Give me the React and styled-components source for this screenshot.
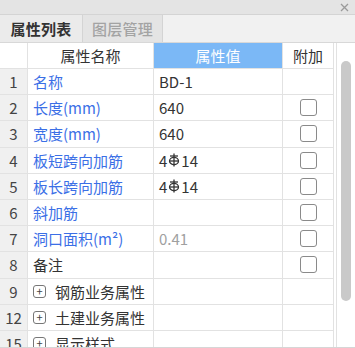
import React from "react";
import styled, { createGlobalStyle } from "styled-components";

const Global = createGlobalStyle`
  html, body { margin: 0; padding: 0; background: #fff; }
  * { box-sizing: border-box; }
`;

const Panel = styled.div`
  width: 355px;
  height: 348px;
  display: flex;
  flex-direction: column;
  overflow: hidden;
  font-family: "Noto Sans CJK SC", "Noto Sans", sans-serif;
  font-size: 15px;
  color: #333;
  background: #fff;
  border-bottom: 1px solid #d6d6d6;
`;

const TitleBar = styled.div`
  height: 15px;
  flex: none;
  background: #e4e4e4;
  border-bottom: 1px solid #d4d4d4;
  display: flex;
  justify-content: flex-end;
  align-items: center;
  padding-right: 6px;
`;

const Close = styled.svg`
  width: 9px;
  height: 9px;
`;

const TabBar = styled.div`
  height: 28px;
  flex: none;
  display: flex;
  background: #f1f1f1;
  border-bottom: 1px solid #d8d8d8;
`;

const Tab = styled.div`
  width: ${(p) => (p.$active ? "83px" : "80px")};
  display: flex;
  align-items: center;
  justify-content: center;
  font-weight: ${(p) => (p.$active ? 700 : 500)};
  color: ${(p) => (p.$active ? "#333" : "#a3a3a3")};
  background: ${(p) => (p.$active ? "#ebebeb" : "#e4e4e4")};
  border-right: 1px solid #d4d4d4;
  letter-spacing: 0.2px;
`;

const Body = styled.div`
  flex: 1;
  display: flex;
  min-height: 0;
`;

const Table = styled.div`
  width: 334px;
  display: grid;
  grid-template-columns: 28px 126px 129px 51px;
  grid-auto-rows: 26.2px;
  grid-template-rows: 26px;
  align-content: start;
  overflow: hidden;
`;

const Cell = styled.div`
  display: flex;
  align-items: center;
  border-right: 1px solid #e2e2e2;
  border-bottom: 1px solid #e2e2e2;
  padding: 0 5px;
  white-space: nowrap;
  overflow: hidden;
  justify-content: ${(p) => (p.$center ? "center" : "flex-start")};
  background: ${(p) => p.$bg || "#fff"};
  color: ${(p) => p.$color || "#333"};
`;

const Num = styled(Cell)`
  background: #f0f0f0;
  justify-content: center;
  padding: 0;
  color: #444;
`;

const HeadCell = styled(Cell)`
  justify-content: center;
  background: ${(p) => (p.$hl ? "#7bb8f6" : "#fff")};
  color: ${(p) => (p.$hl ? "#fff" : "#333")};
`;

const Check = styled.span`
  width: 17px;
  height: 17px;
  border: 1.5px solid #8a8a8a;
  border-radius: 3px;
  background: #fff;
`;

const Plus = styled.span`
  width: 13px;
  height: 13px;
  border: 1px solid #777;
  border-radius: 3px;
  display: inline-flex;
  align-items: center;
  justify-content: center;
  font-size: 11px;
  line-height: 1;
  color: #444;
  margin: 0 9px 0 0;
`;

const ScrollTrack = styled.div`
  flex: 1;
  border-left: 1px solid #e2e2e2;
  margin-left: 2px;
  padding: 18px 0 0 4px;
`;

const Thumb = styled.div`
  width: 10px;
  height: 240px;
  border-radius: 5px;
  background: #c9c9c9;
`;

const Rebar = () => (
  <svg width="12" height="14" viewBox="0 0 12 14" style={{ margin: "0 1px" }}>
    <g stroke="#333" strokeWidth="1.3" fill="none">
      <line x1="6" y1="0.5" x2="6" y2="13.5" />
      <ellipse cx="6" cy="8" rx="4.5" ry="3.6" />
      <line x1="2" y1="3" x2="10" y2="3" />
      <line x1="1.5" y1="8" x2="10.5" y2="8" />
    </g>
  </svg>
);

const rows = [
  { n: 1, name: "名称", blue: true, value: "BD-1", check: false },
  { n: 2, name: "长度(mm)", blue: true, value: "640", check: true },
  { n: 3, name: "宽度(mm)", blue: true, value: "640", check: true },
  { n: 4, name: "板短跨向加筋", blue: true, value: "rebar", check: true },
  { n: 5, name: "板长跨向加筋", blue: true, value: "rebar", check: true },
  { n: 6, name: "斜加筋", blue: true, value: "", check: true },
  { n: 7, name: "洞口面积(m²)", blue: true, value: "0.41", grey: true, check: true },
  { n: 8, name: "备注", value: "", check: true },
  { n: 9, name: "钢筋业务属性", plus: true },
  { n: 12, name: "土建业务属性", plus: true },
  { n: 15, name: "显示样式", plus: true },
];

export default function App() {
  return (
    <Panel>
      <Global />
      <TitleBar>
        <Close viewBox="0 0 9 9">
          <path d="M1 1L8 8M8 1L1 8" stroke="#9a9a9a" strokeWidth="1.3" />
        </Close>
      </TitleBar>
      <TabBar>
        <Tab $active>属性列表</Tab>
        <Tab>图层管理</Tab>
      </TabBar>
      <Body>
        <Table>
          <HeadCell />
          <HeadCell>属性名称</HeadCell>
          <HeadCell $hl>属性值</HeadCell>
          <HeadCell>附加</HeadCell>
          {rows.map((r) => (
            <React.Fragment key={r.n}>
              <Num>{r.n}</Num>
              <Cell $color={r.blue ? "#3b6fe6" : "#333"}>
                {r.plus && <Plus>+</Plus>}
                {r.name}
              </Cell>
              <Cell $color={r.grey ? "#a0a0a0" : "#333"}>
                {r.value === "rebar" ? (
                  <>
                    4<Rebar />14
                  </>
                ) : (
                  r.value
                )}
              </Cell>
              <Cell $center>{r.check && <Check />}</Cell>
            </React.Fragment>
          ))}
        </Table>
        <ScrollTrack>
          <Thumb />
        </ScrollTrack>
      </Body>
    </Panel>
  );
}
